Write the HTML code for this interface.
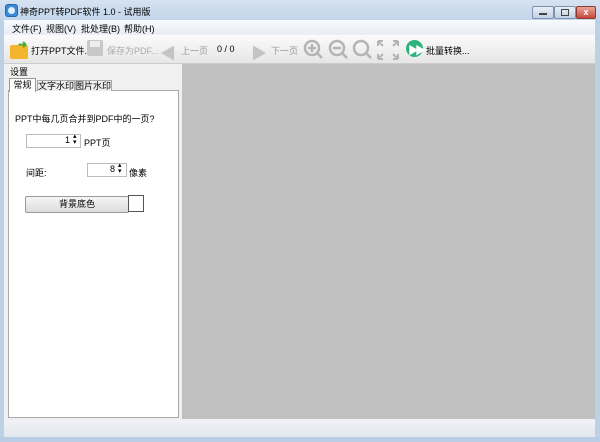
<html><head><style>
body{margin:0;width:600px;height:442px;overflow:hidden;font-family:"Liberation Sans","Noto Sans CJK SC",sans-serif;font-size:9px;color:#000;background:#bcd0e6;position:relative}
.a{position:absolute;white-space:nowrap}
</style></head><body>
<div class="a" style="left:0;top:0;width:600px;height:20px;background:linear-gradient(#d6e3f1,#c2d5ea)"></div>
<div class="a" style="left:5px;top:4px;width:11px;height:11px;border-radius:3px;background:#3a8bd8;border:1px solid #2565a8"><div class="a" style="left:2px;top:2px;width:7px;height:7px;border-radius:50%;background:#dff0ff"></div></div>
<div class="a" style="left:20px;top:5px;font-size:9px">神奇PPT转PDF软件 1.0 - 试用版</div>
<div class="a" style="left:532px;top:6px;width:20px;height:11px;border:1px solid #7c92ad;border-radius:2px;background:linear-gradient(#e8eef6,#c3d1e2)"><div class="a" style="left:6px;top:6px;width:8px;height:2px;background:#444"></div></div>
<div class="a" style="left:554px;top:6px;width:20px;height:11px;border:1px solid #7c92ad;border-radius:2px;background:linear-gradient(#e8eef6,#c3d1e2)"><div class="a" style="left:6px;top:2px;width:6px;height:5px;border:1px solid #444"></div></div>
<div class="a" style="left:576px;top:6px;width:18px;height:11px;border:1px solid #8a3a30;border-radius:2px;background:linear-gradient(#e9a59a,#c9463a);color:#fff;font-size:9px;text-align:center;line-height:11px;font-weight:bold">x</div>
<div class="a" style="left:4px;top:20px;width:591px;height:417px;background:#f0f0f0"></div>
<div class="a" style="left:4px;top:20px;width:591px;height:14px;background:linear-gradient(#f8fafd,#e8edf4)"></div>
<div class="a" style="left:12px;top:22px">文件(F)</div>
<div class="a" style="left:46px;top:22px">视图(V)</div>
<div class="a" style="left:81px;top:22px">批处理(B)</div>
<div class="a" style="left:124px;top:22px">帮助(H)</div>
<div class="a" style="left:4px;top:35px;width:591px;height:28px;background:linear-gradient(#fbfbfb,#e6e6e6);border-bottom:1px solid #ccc"></div>
<div class="a" style="left:10px;top:45px;width:18px;height:14px;background:#f2b52c;border-radius:2px"></div>
<div class="a" style="left:18px;top:38px;color:#3bae3b;font-size:11px;font-weight:bold">➜</div>
<div class="a" style="left:31px;top:44px">打开PPT文件...</div>
<div class="a" style="left:87px;top:40px;width:16px;height:16px;background:#c8c8c8;border-radius:2px"><div class="a" style="left:3px;top:1px;width:10px;height:6px;background:#eee"></div></div>
<div class="a" style="left:107px;top:44px;color:#aaa">保存为PDF...</div>
<div class="a" style="left:160px;top:40px;color:#c4c4c4;font-size:16px">◀</div>
<div class="a" style="left:181px;top:44px;color:#999">上一页</div>
<div class="a" style="left:217px;top:44px">0 / 0</div>
<div class="a" style="left:251px;top:40px;color:#c4c4c4;font-size:16px">▶</div>
<div class="a" style="left:271px;top:44px;color:#999">下一页</div>
<svg class="a" style="left:302px;top:38px" width="100" height="24" fill="none" stroke="#b4b4b4" stroke-width="2.5"><circle cx="10" cy="10" r="7"/><path d="M15 15l5 5M6 10h8M10 6v8"/><circle cx="35" cy="10" r="7"/><path d="M40 15l5 5M31 10h8"/><circle cx="59" cy="10" r="7"/><path d="M64 15l5 5"/><path d="M76 3h5M76 3v5M76 3l5 5M96 3h-5M96 3v5M96 3l-5 5M76 21h5M76 21v-5M76 21l5-5M96 21h-5M96 21v-5M96 21l-5-5" stroke-width="2"/></svg>
<div class="a" style="left:406px;top:40px;width:17px;height:17px;border-radius:50%;background:#2fb27c"></div>
<div class="a" style="left:408px;top:42px;color:#fff;font-size:11px;letter-spacing:-4px">▶▶</div>
<div class="a" style="left:426px;top:44px">批量转换...</div>
<div class="a" style="left:182px;top:64px;width:413px;height:355px;background:#c0c0c0"></div>
<div class="a" style="left:10px;top:65px">设置</div>
<div class="a" style="left:8px;top:90px;width:169px;height:326px;background:#fff;border:1px solid #aaa"></div>
<div class="a" style="left:9px;top:78px;width:25px;height:13px;background:#fff;border:1px solid #999;border-bottom:none;text-align:center;line-height:12px">常规</div>
<div class="a" style="left:37px;top:80px;width:36px;height:10px;background:#eee;border:1px solid #aaa;border-bottom:none;text-align:center;line-height:10px">文字水印</div>
<div class="a" style="left:74px;top:80px;width:36px;height:10px;background:#eee;border:1px solid #aaa;border-bottom:none;text-align:center;line-height:10px">图片水印</div>
<div class="a" style="left:15px;top:112px">PPT中每几页合并到PDF中的一页?</div>
<div class="a" style="left:26px;top:134px;width:53px;height:12px;border:1px solid #bbb;background:#fff"></div>
<div class="a" style="left:40px;top:134px;width:30px;text-align:right;line-height:12px">1</div>
<div class="a" style="left:73px;top:134px;font-size:7px;line-height:6px">▴<br>▾</div>
<div class="a" style="left:84px;top:136px">PPT页</div>
<div class="a" style="left:26px;top:166px">间距:</div>
<div class="a" style="left:87px;top:163px;width:38px;height:12px;border:1px solid #bbb"></div>
<div class="a" style="left:90px;top:163px;width:25px;text-align:right;line-height:12px">8</div>
<div class="a" style="left:118px;top:163px;font-size:7px;line-height:6px">▴<br>▾</div>
<div class="a" style="left:129px;top:166px">像素</div>
<div class="a" style="left:25px;top:196px;width:102px;height:15px;border:1px solid #999;border-radius:2px;background:linear-gradient(#f6f6f6,#dcdcdc);text-align:center;line-height:15px">背景底色</div>
<div class="a" style="left:128px;top:195px;width:14px;height:15px;border:1px solid #555;background:#fff"></div>
<div class="a" style="left:4px;top:420px;width:591px;height:17px;background:linear-gradient(#f0f2f5,#e3e8ee)"></div>
<div class="a" style="left:0;top:437px;width:600px;height:5px;background:#b8cde4"></div>
</body></html>
